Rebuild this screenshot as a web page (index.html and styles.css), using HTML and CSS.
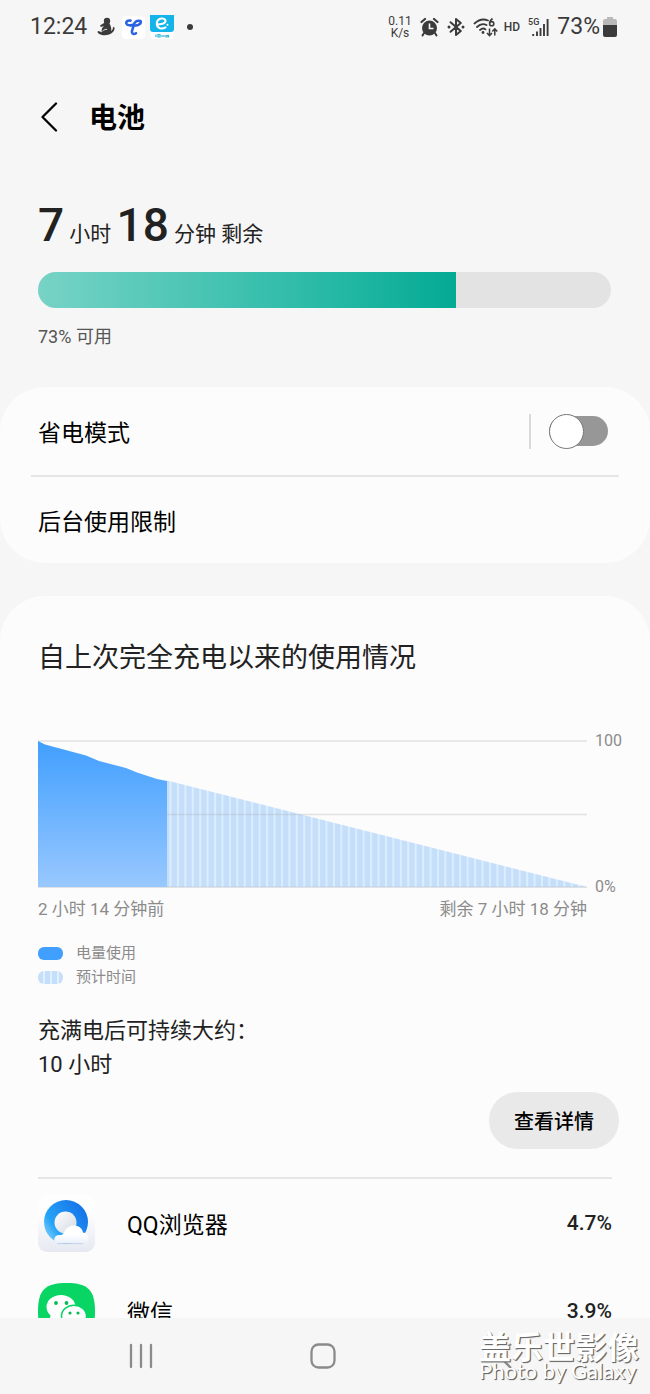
FILE: index.html
```html
<!DOCTYPE html>
<html lang="zh-CN">
<head>
<meta charset="utf-8">
<meta name="viewport" content="width=device-width, initial-scale=1">
<title>电池</title>
<link rel="stylesheet" href="styles.css">
</head>
<body>
<div class="phone">
  <div class="status">
    <div class="status-left">
      <span class="clock">12:24</span>
      <svg class="notice-person" width="18" height="20" viewBox="0 0 18 20" aria-hidden="true">
        <circle cx="10" cy="4" r="3.200" fill="#3b3b3b"/>
        <path d="M7 6 3 8.500l.8 1.500 3.200-1C5 10.500 4.200 13 4.800 15.200L1.500 14c-1.200.2-1.200 1.700 0 2.400C5 19 12 19 16 15c1.400-1.500 2-3.200 1.200-5l-1.300.3c.2 1.600-.5 2.700-1.700 3.700.4-3-.4-5.800-2.200-8Z" fill="#3b3b3b"/>
        <path d="M5.500 14.200c1.500-1.500 3-2 4.500-1.800" fill="none" stroke="#f6f6f6" stroke-width=".9"/>
      </svg>
      <svg width="23" height="23" viewBox="0 0 23 23" aria-hidden="true">
        <rect width="23" height="23" rx="4" fill="#fff"/>
        <path d="M8.500 4.600C5.500 4.200 4 5.500 4.300 7.300 5 9.500 9 10 12 8.500M18.500 5c1.200 2.300-2 4.800-6 4.500M18.500 5c-4-.8-6.500 1-7 5-.5 2.800-2 4.300-1.500 6.500.5 2 2.500 1.800 4 .7" fill="none" stroke="#2a62e2" stroke-width="2.600" stroke-linecap="round"/>
      </svg>
      <svg width="24" height="24" viewBox="0 0 24 24" aria-hidden="true">
        <rect width="24" height="24" rx="3" fill="#fdfdfd"/>
        <path d="M0 0h24v14q0 3-3 3H3q-3 0-3-3Z" fill="#14b4ea"/>
        <path d="M8.500 9.200c3 .2 7.300-.8 7-3.600C15.200 2.500 7.500 2.500 6.800 8c-.4 5 4.700 7 8.700 4.300" fill="none" stroke="#fff" stroke-width="2" stroke-linecap="round"/>
        <circle cx="17.500" cy="9.800" r="1" fill="#fff"/>
        <path d="M6 19.500v2.500M8 19.500h2v2.500H8ZM12 20v2M14 20v2M16 20.500h2.500v1.500H16Z" fill="none" stroke="#35b8d8" stroke-width="1.200"/>
      </svg>
      <span class="dot"></span>
    </div>
    <div class="status-right">
      <span class="speed">0.11<br>K/s</span>
      <svg width="19" height="20" viewBox="0 0 19 20" aria-hidden="true">
        <path d="M1.500 5 5 2M17.500 5 14 2" stroke="#3b3b3b" stroke-width="2.200" stroke-linecap="round"/>
        <path d="M4 16l-1.500 2.500M15 16l1.500 2.500" stroke="#3b3b3b" stroke-width="2" stroke-linecap="round"/>
        <circle cx="9.500" cy="11" r="7.500" fill="#3b3b3b"/>
        <path d="M9.500 6.500V11.500h4" fill="none" stroke="#f6f6f6" stroke-width="1.600"/>
      </svg>
      <svg width="18" height="20" viewBox="0 0 18 20" aria-hidden="true">
        <path d="M3.500 5.200 13.800 14 9 18V2l4.800 4L3.500 14.800" fill="none" stroke="#3b3b3b" stroke-width="2" stroke-linejoin="round" stroke-linecap="round"/>
        <circle cx="2" cy="10" r="1.500" fill="#3b3b3b"/><circle cx="16" cy="10" r="1.500" fill="#3b3b3b"/>
      </svg>
      <svg class="wifi" width="25" height="20" viewBox="0 0 25 20" aria-hidden="true">
        <path d="M1.500 6.500Q8 .5 15 3.500M4 10Q8.500 5.500 13.500 8M7 13q3-2.600 5.500-.6" fill="none" stroke="#3b3b3b" stroke-width="1.800" stroke-linecap="round"/>
        <circle cx="10" cy="15.500" r="1.400" fill="#3b3b3b"/>
        <path d="M19.500 1.500C17.500 3 16.600 4.500 16.600 6.300" fill="none" stroke="#3b3b3b" stroke-width="1.700"/>
        <circle cx="18.700" cy="6.700" r="2.100" fill="none" stroke="#3b3b3b" stroke-width="1.600"/>
        <path d="M16.500 11.500v7M14 16l2.500 2.700L19 16M21.800 18.500v-6.500M19.300 14.500l2.500-2.700 2.500 2.700" fill="none" stroke="#3b3b3b" stroke-width="1.500"/>
      </svg>
      <span class="hd">HD</span>
      <span class="signal">
        <span class="five-g">5G</span>
        <svg width="17" height="17" viewBox="0 0 17 17" aria-hidden="true">
          <path d="M1.200 15v2M5 12.500V17M8.500 9v8M12 5v12M15.600 0v17" stroke="#3b3b3b" stroke-width="1.900"/>
        </svg>
      </span>
      <span class="clock">73%</span>
      <svg width="14" height="20" viewBox="0 0 14 20" aria-hidden="true">
        <path d="M4 0h6v2h2q2 0 2 2v6H0V4q0-2 2-2h2Z" fill="#b9b9b9"/>
        <path d="M0 8h14v10q0 2-2 2H2q-2 0-2-2Z" fill="#3b3b3b"/>
      </svg>
    </div>
  </div>

  <main class="content">
    <header class="header">
      <button class="back" type="button" aria-label="返回">
        <svg width="18" height="30" viewBox="0 0 18 30" aria-hidden="true"><path d="M16 1.500 2.500 15 16 28.500" fill="none" stroke="#050505" stroke-width="2.300" stroke-linecap="round" stroke-linejoin="round"/></svg>
      </button>
      <h1 class="title">电池</h1>
    </header>

    <section class="summary">
      <p class="remaining"><b>7</b> 小时 <b>18</b> 分钟 剩余</p>
      <div class="meter" role="img" aria-label="73%"><div class="meter-fill" style="width:73%"></div></div>
      <p class="available">73% 可用</p>
    </section>

    <section class="card options">
      <div class="option">
        <label for="saver">省电模式</label>
        <span class="toggle-wrap"><input class="toggle" type="checkbox" id="saver"></span>
      </div>
      <a class="option" href="#limits">后台使用限制</a>
    </section>

    <section class="card usage">
      <h2 class="usage-title">自上次完全充电以来的使用情况</h2>
      <div class="chart">
        <svg class="plot" viewBox="0 0 549 148" preserveAspectRatio="none" aria-hidden="true">
          <defs>
            <linearGradient id="used" x1="0" y1="0" x2="0" y2="1"><stop offset="0" stop-color="#419fff"/><stop offset="1" stop-color="#98c8fe"/></linearGradient>
            <pattern id="stripes" x="131.500" width="7.430" height="148" patternUnits="userSpaceOnUse"><rect width="7.430" height="148" fill="#c5defa"/><rect width="2" height="148" fill="#dbeefe"/></pattern>
          </defs>
          <path d="M129 40.500 549 147H129Z" fill="url(#stripes)"/>
          <path d="M0 1h549M0 74.500h549M0 147.300h549" stroke="#b4b8be" stroke-opacity=".4" stroke-width="1.400"/>
          <path d="M0 1 7 4.500 48 15.500 61 21 88 28 99 32.500 119 39 129 41V147H0Z" fill="url(#used)"/>
        </svg>
        <div class="axis"><span>100</span><span>0%</span></div>
        <div class="times"><span>2 小时 14 分钟前</span><span>剩余 7 小时 18 分钟</span></div>
      </div>
      <ul class="legend">
        <li><span class="swatch used"></span>电量使用</li>
        <li><span class="swatch expected"></span>预计时间</li>
      </ul>
      <p class="estimate">充满电后可持续大约：<br>10 小时</p>
      <button class="details" type="button">查看详情</button>

      <ul class="apps">
        <li class="app">
          <svg width="57" height="57" viewBox="0 0 57 57" aria-hidden="true">
            <defs>
              <linearGradient id="tile" x1="0" y1="0" x2="0" y2="1"><stop offset=".3" stop-color="#fefefe"/><stop offset="1" stop-color="#e6e9f2"/></linearGradient>
              <linearGradient id="ring" x1="0" y1="1" x2="1" y2=".3"><stop offset="0" stop-color="#9fe0fc"/><stop offset=".35" stop-color="#25a3f8"/><stop offset="1" stop-color="#1673e8"/></linearGradient>
              <linearGradient id="ball" x1="0" y1="0" x2="1" y2="1"><stop offset="0" stop-color="#fff"/><stop offset="1" stop-color="#d3d9e2"/></linearGradient>
              <linearGradient id="cloud" x1="0" y1="0" x2="0" y2="1"><stop offset=".5" stop-color="#fff"/><stop offset="1" stop-color="#e9effa"/></linearGradient>
            </defs>
            <rect width="57" height="57" rx="9" fill="url(#tile)"/>
            <circle cx="28" cy="27" r="22" fill="url(#ring)"/>
            <circle cx="27.500" cy="27.500" r="11" fill="url(#ball)"/>
            <path d="M21 48.500c-6 0-6.500-8 0-8.500 3 0 4-.5 5.500-3.500 4-8 16.500-8 18.500 1 3.500.5 5.500 3 5.500 5.500 0 3-2 5.500-6 5.500Z" fill="url(#cloud)"/>
            <path d="M19 48.600h26" fill="none" stroke="#b9cbe6" stroke-width=".8"/>
          </svg>
          <span class="app-name">QQ浏览器</span><span class="app-share">4.7%</span>
        </li>
        <li class="app">
          <svg width="57" height="57" viewBox="0 0 57 57" aria-hidden="true">
            <path d="M28.500 0C50 0 57 7 57 28.500S50 57 28.500 57 0 50 0 28.500 7 0 28.500 0Z" fill="#09d565"/>
            <ellipse cx="23" cy="24" rx="14.500" ry="12" fill="#fff"/>
            <path d="m13 31-2 8 8-4Z" fill="#fff"/>
            <circle cx="18" cy="20" r="1.900" fill="#09b955"/><circle cx="28.500" cy="20" r="1.900" fill="#09b955"/>
            <ellipse cx="36" cy="33" rx="12.500" ry="10.800" fill="#fff" stroke="#09d565" stroke-width="1.500"/>
            <path d="m42 41 4 5-1-7Z" fill="#fff"/>
            <circle cx="32" cy="30" r="1.600" fill="#09b955"/><circle cx="40" cy="30" r="1.600" fill="#09b955"/>
          </svg>
          <span class="app-name">微信</span><span class="app-share">3.9%</span>
        </li>
      </ul>
    </section>
  </main>

  <nav class="navbar">
    <button type="button" aria-label="最近任务"><svg width="26" height="26" viewBox="0 0 26 26" aria-hidden="true"><path d="M3 2v22M13 2v22M23 2v22" stroke="#8b8b8b" stroke-width="2.300" stroke-linecap="round"/></svg></button>
    <button type="button" aria-label="主屏幕"><svg width="26" height="26" viewBox="0 0 26 26" aria-hidden="true"><rect x="1.500" y="1.500" width="23" height="23" rx="7" fill="none" stroke="#8b8b8b" stroke-width="2.300"/></svg></button>
    <button type="button" aria-label="返回"><svg width="26" height="26" viewBox="0 0 26 26" aria-hidden="true"><path d="M19 1 7 13l12 12" fill="none" stroke="#8b8b8b" stroke-width="2.300"/></svg></button>
    <div class="watermark"><span class="mark-cn">盖乐世影像</span><span class="mark-en">Photo by Galaxy</span></div>
  </nav>
</div>
</body>
</html>
```

FILE: styles.css
```css
* { box-sizing: border-box; }
body {
  margin: 0;
  background: #f6f6f6;
  color: #000;
  font-family: Roboto, "Noto Sans CJK SC", sans-serif;
}
h1, h2, p, ul { margin: 0; padding: 0; }
ul { list-style: none; }
button { border: 0; padding: 0; background: none; font: inherit; color: inherit; cursor: pointer; }
a { color: inherit; text-decoration: none; }
svg { display: block; flex: none; }

.phone { display: flex; flex-direction: column; height: 100vh; }

.status {
  display: flex;
  flex: none;
  align-items: center;
  justify-content: space-between;
  height: 54px;
  padding: 0 33px 0 30px;
  color: #3b3b3b;
}
.status-left { display: flex; align-items: center; gap: 5px; }
.notice-person { margin: 0 2px 0 5px; }
.status-right { display: flex; align-items: center; gap: 8px; }
.clock { font-size: 23px; line-height: 28px; }
.status-right .clock { margin-right: -5px; }
.dot { width: 6px; height: 6px; margin-left: 8px; border-radius: 50%; background: #3b3b3b; }
.speed { font-size: 12px; line-height: 12px; text-align: center; }
.wifi { margin-right: -2px; }
.hd { font-size: 12px; font-weight: 500; }
.signal { display: flex; align-items: flex-end; height: 18px; }
.five-g { align-self: flex-start; margin-right: -7px; font-size: 9px; line-height: 9px; font-weight: 500; }

.content { flex: 1; min-height: 0; overflow-y: auto; scrollbar-width: none; }

.header { display: flex; align-items: center; gap: 31px; padding: 42px 40px 0; }
.title { padding-top: 4px; font-size: 28px; line-height: 38px; font-weight: 700; }

.summary { padding: 60px 39px 0 38px; }
.remaining { font-size: 21px; line-height: 54px; color: #222; }
.remaining b { font-size: 46px; font-weight: 500; }
.meter { height: 36px; margin-top: 11px; overflow: hidden; border-radius: 18px; background: #e3e3e3; }
.meter-fill { height: 100%; background: linear-gradient(90deg, #77d3c6, #26b9a5 70%, #04aa94); }
.available { margin-top: 16px; font-size: 18px; line-height: 26px; color: #555; }

.card { border-radius: 45px; background: #fcfcfc; }
.options { margin-top: 37px; padding: 0 31px; }
.option {
  display: flex;
  align-items: center;
  justify-content: space-between;
  height: 88px;
  padding: 0 11px 0 7px;
  font-size: 23px;
}
.option + .option { border-top: 2px solid #e6e6e6; }
.toggle-wrap { display: flex; padding-left: 18px; border-left: 2px solid #d9d9d9; }
.toggle { display: grid; align-items: center; width: 59px; height: 35px; margin: 0; appearance: none; }
.toggle::before, .toggle::after { content: ""; box-sizing: border-box; grid-area: 1 / 1; }
.toggle::before { height: 30px; border-radius: 15px; background: #979797; }
.toggle::after { width: 35px; height: 35px; border: 1px solid #777; border-radius: 50%; background: #fff; }
.toggle:checked::before { background: #3e91ff; }
.toggle:checked::after { justify-self: end; }

.usage { margin-top: 33px; padding: 42px 38px 24px; }
.usage-title { font-size: 27px; line-height: 40px; font-weight: 400; color: #222; }

.chart { display: grid; grid-template-columns: minmax(0, 1fr) 27px; column-gap: 8px; margin: 62px -10px 0 0; color: #8b8b8b; }
.plot { width: 100%; height: 148px; }
.axis { display: flex; flex-direction: column; justify-content: space-between; margin: -9px 0; font-size: 16px; line-height: 20px; }
.times { display: flex; justify-content: space-between; margin-top: 8px; font-size: 17px; line-height: 26px; }

.legend { margin-top: 19px; font-size: 15px; line-height: 24px; color: #8b8b8b; }
.legend li { display: flex; align-items: center; gap: 13px; }
.swatch { width: 25px; height: 13px; border-radius: 6px; }
.used { background: #419fff; }
.expected { background: repeating-linear-gradient(90deg, #c5defa 0 5px, #dff0fe 5px 7px); }

.estimate { margin-top: 25px; font-size: 22px; line-height: 34px; color: #222; }
.details {
  display: block;
  height: 57px;
  margin: 10px -7px 0 auto;
  padding: 0 25px;
  border-radius: 29px;
  background: #e9e9e9;
  font-size: 20px;
  font-weight: 500;
}

.apps { margin-top: 28px; border-top: 2px solid #e6e6e6; }
.app { display: flex; align-items: center; height: 88px; }
.app-name { flex: 1; margin-left: 32px; font-size: 23px; }
.app-share { font-size: 21px; font-weight: 500; color: #222; }

.navbar {
  position: relative;
  display: grid;
  flex: none;
  grid-template-columns: repeat(3, 1fr);
  height: 76px;
  padding: 0 54px 0 50px;
  background: #f6f6f6;
}
.navbar button { display: flex; align-items: center; justify-content: center; }
.watermark {
  position: absolute;
  right: 11px;
  bottom: 12px;
  display: flex;
  flex-direction: column;
  color: #fff;
  text-shadow: 1px 1px 1px #666, 1px 1px 0 #888;
  pointer-events: none;
}
.mark-cn { font-size: 32px; line-height: 24px; font-weight: 700; }
.mark-en { font-family: Lato, sans-serif; font-size: 22px; line-height: 22px; font-weight: 400; }
```
